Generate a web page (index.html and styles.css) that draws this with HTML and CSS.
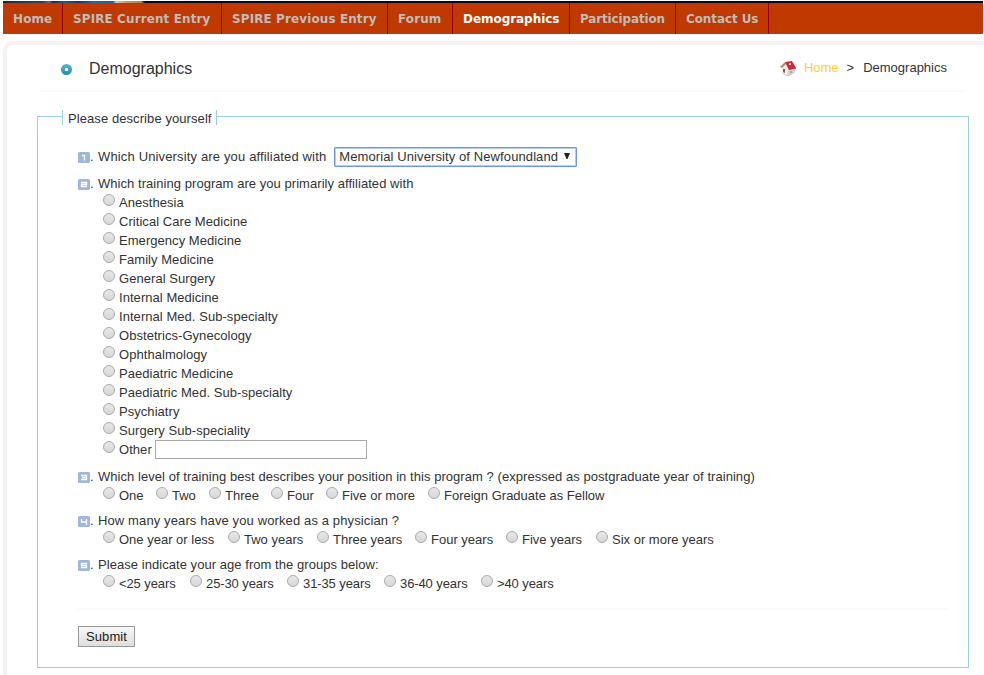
FILE: index.html
```html
<!DOCTYPE html>
<html lang="en">
<head>
<meta charset="utf-8">
<title>Demographics</title>
<link rel="stylesheet" href="styles.css">
</head>
<body>
<div class="banner"></div>
<nav class="nav">
<a class="w1">Home</a><a class="w2">SPIRE Current Entry</a><a class="w3">SPIRE Previous Entry</a><a class="w4">Forum</a><a class="w5 active">Demographics</a><a class="w6">Participation</a><a class="w7">Contact Us</a>
</nav>
<main class="panel">
<header class="head">
<svg class="bullet" width="11" height="11" viewBox="0 0 11 11"><defs><linearGradient id="b" x2="0" y2="1"><stop stop-color="#58b4d8"/><stop offset="1" stop-color="#2789b5"/></linearGradient></defs><circle cx="5.5" cy="5.5" r="5.5" fill="url(#b)"/><rect x="4" y="4" width="3" height="3" rx=".7" fill="#fff"/></svg>
<h1>Demographics</h1>
<div class="crumbs">
<svg width="17" height="17" viewBox="0 0 17 17"><path d="M2 7l4-4 3 5v7l-7-3z" fill="#eee9e5"/><path d="M9 9l6-2v5l-7 4-1-1z" fill="#d6d0cc"/><path d="M0 7l5-5 2 1-5 5z" fill="#b08a7c"/><path d="M5 2l7-1 4 7-7 2z" fill="#d92635"/><path d="M9 9l7-1" stroke="#b5303c"/><path d="M2 9l5 3v3l-5-3z" fill="#f8f6f3"/><path d="M3 9h2v4l-2-1z" fill="#8a5b49"/><path d="M10 11h2v2h-2z" fill="#aaa"/><path d="M9 3h2v2H9z" fill="#f5c9c5"/><path d="M2 13l6 3 7-4" fill="none" stroke="#ccc"/></svg>
<a>Home</a><span class="sep">&gt;</span><span>Demographics</span>
</div>
</header>
<form class="survey">
<div class="legend"><span>Please describe yourself</span></div>
<section class="q first"><div class="ask"><svg class="num" viewBox="0 0 12 11"><rect width="12" height="11" rx="1.5"/><path d="M4 3.500h2.500v5" stroke-width="2"/></svg><i>.</i><span>Which University are you affiliated with</span><div class="select" tabindex="0"><span>Memorial University of Newfoundland</span><svg width="6" height="7" viewBox="0 0 6 7"><path d="M0 0h6L3.5 6h-1z" fill="#222"/></svg></div></div></section>
<section class="q second"><div class="ask"><svg class="num" viewBox="0 0 12 11"><rect width="12" height="11" rx="1.5"/><path d="M3 3.5h5.500v2h-5v2H9"/></svg><i>.</i><span>Which training program are you primarily affiliated with</span></div>
<div class="list">
<label><b></b>Anesthesia</label>
<label><b></b>Critical Care Medicine</label>
<label><b></b>Emergency Medicine</label>
<label><b></b>Family Medicine</label>
<label><b></b>General Surgery</label>
<label><b></b>Internal Medicine</label>
<label><b></b>Internal Med. Sub-specialty</label>
<label><b></b>Obstetrics-Gynecology</label>
<label><b></b>Ophthalmology</label>
<label><b></b>Paediatric Medicine</label>
<label><b></b>Paediatric Med. Sub-specialty</label>
<label><b></b>Psychiatry</label>
<label><b></b>Surgery Sub-speciality</label>
<label><b></b>Other<input type="text"></label>
</div></section>
<section class="q"><div class="ask"><svg class="num" viewBox="0 0 12 11"><rect width="12" height="11" rx="1.5"/><path d="M3 3.5h5.500v4H3M4 5.500h4"/></svg><i>.</i><span>Which level of training best describes your position in this program ? (expressed as postgraduate year of training)</span></div>
<div class="row level"><label><b></b>One</label><label><b></b>Two</label><label><b></b>Three</label><label><b></b>Four</label><label><b></b>Five or more</label><label><b></b>Foreign Graduate as Fellow</label></div></section>
<section class="q"><div class="ask wide"><svg class="num" viewBox="0 0 12 11"><rect width="12" height="11" rx="1.5"/><path d="M3.500 3v3h5M8.500 3v6"/></svg><i>.</i><span>How many years have you worked as a physician ?</span></div>
<div class="row years"><label><b></b>One year or less</label><label><b></b>Two years</label><label><b></b>Three years</label><label><b></b>Four years</label><label><b></b>Five years</label><label><b></b>Six or more years</label></div></section>
<section class="q"><div class="ask"><svg class="num" viewBox="0 0 12 11"><rect width="12" height="11" rx="1.5"/><path d="M9 3.500H3.500v2h5v2H3"/></svg><i>.</i><span>Please indicate your age from the groups below:</span></div>
<div class="row ages"><label><b></b>&lt;25 years</label><label><b></b>25-30 years</label><label><b></b>31-35 years</label><label><b></b>36-40 years</label><label><b></b>&gt;40 years</label></div></section>
<div class="rule"></div>
<button type="button">Submit</button>
</form>
</main>
</body>
</html>
```
FILE: styles.css
```css
* { box-sizing: border-box; }
html, body { height: 675px; overflow: hidden; }
body { margin: 0; background: #fff; color: #333; font: 13px/19px "Liberation Sans", Arial, sans-serif; }
.banner { height: 3px; margin: 0 1px 0 3px; border-top: 1px solid #fff; background: linear-gradient(90deg, #172a32 0, #253d55 25px, #2a3f70 40px, #8d5c5c 46px, #123050 50px, #1c5a98 62px, #123565 75px, #2567a8 90px, #235c9e 110px, #d0cbb0 113px, #b99872 125px, #a48a58 138px, #000827 142px); }
.nav { display: flex; height: 31px; margin: 0 1px 0 3px; background: #c03900; font: bold 12px/32px "DejaVu Sans", Verdana, sans-serif; letter-spacing: .1px; color: #bdbdbd; }
.nav a { border-right: 1px solid #900; padding-left: 10px; white-space: nowrap; }
.w1 { width: 60px; }
.w2 { width: 159px; }
.w3 { width: 166px; }
.w4 { width: 65px; }
.w5 { width: 117px; }
.w6 { width: 106px; }
.w7 { width: 93px; }
.nav .active { color: #fff; letter-spacing: -.05px; }
.w6 { letter-spacing: -.15px; }
.w7 { letter-spacing: -.1px; }
.panel { margin: 7px -12px 0 3px; height: 660px; border: 4px solid #f3f3f3; border-radius: 10px; padding: 0 23px 0 30px; }
.head { display: flex; align-items: center; width: 926px; height: 47px; margin-left: 3px; padding: 0 19px 0 21px; border-bottom: 2px solid #fafafa; }
.bullet { margin-top: 3px; }
.head h1 { margin: 2px auto 0 17px; font-size: 16px; font-weight: normal; }
.crumbs { display: flex; align-items: center; }
.crumbs svg { margin: 2px 7px 0 0; }
.crumbs a { color: #fc3; }
.sep { margin: 0 9px 0 8px; }
.survey { width: 932px; height: 552px; margin-top: 24px; padding: 0 20px 0 40px; border: 1px solid #9bcfe6; letter-spacing: .05px; }
.legend { height: 15px; margin: -7px 0 0 -16px; }
.legend span { display: block; width: 155px; height: 15px; line-height: 17px; padding: 0 5px; background: #fff; border: solid #9bcfe6; border-width: 0 1px; letter-spacing: .08px; white-space: nowrap; }
.q { margin-top: 8px; white-space: nowrap; }
.first { margin-top: 22px; }
.first .ask { letter-spacing: .15px; }
.wide { letter-spacing: .12px; }
.ask { display: flex; align-items: center; height: 19px; }
.num { width: 12px; height: 11px; margin-top: 2px; fill: #9fb8d9; }
.num path { fill: none; stroke: #fff; }
.second .num path, .wide .num path, .q .num path { stroke-width: 1.300; }
.ask i { width: 8px; font-style: normal; }
.select { display: flex; flex: none; align-items: center; justify-content: space-between; width: 243px; height: 20px; margin-left: 8px; padding: 0 6px 0 4px; border: 1px solid #6c98e0; border-radius: 1px; box-shadow: inset 0 0 0 1px #b3cdf5; outline: 0; }
.first .select { letter-spacing: .1px; }
.select svg { margin-top: -1px; }
.list, .row { padding-left: 25px; }
.list label, .row label { display: flex; height: 19px; }
b { flex: none; width: 12px; height: 12px; margin: 1px 4px 0 0; border: 1px solid #aaa; border-radius: 50%; background: linear-gradient(#e8e8e8, #d7d7d7); }
.list input { width: 212px; height: 19px; margin-left: 3px; border: 1px solid #a9a9a9; background: #fff; }
.row { display: grid; height: 17px; }
.level { grid-template-columns: 53px 53px 62px 55px 102px 200px; letter-spacing: 0; }
.years { grid-template-columns: 125px 89px 98px 91px 90px 130px; letter-spacing: 0; }
.ages { grid-template-columns: 87px 97px 97px 97px 100px; letter-spacing: -.1px; }
.rule { height: 2px; margin: 17px 0 16px; background: #fafafa; }
button { display: block; width: 57px; height: 21px; padding: 0; border: 1px solid #999; border-radius: 0; background: linear-gradient(#f7f7f7, #dedede); color: #222; font: 13px/18px "Liberation Sans", Arial, sans-serif; letter-spacing: .1px; }
```
